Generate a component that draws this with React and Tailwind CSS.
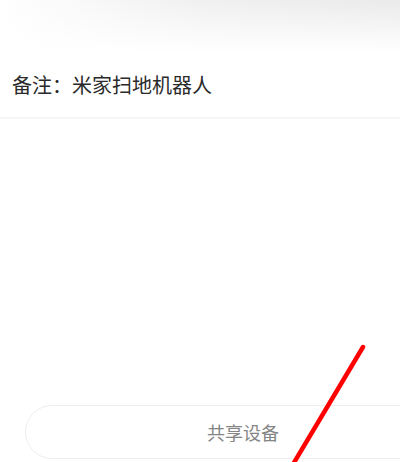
export default function App() {
  return (
    <div
      className="relative w-[400px] h-[462px] overflow-hidden bg-white"
      style={{ fontFamily: '"Noto Sans CJK SC", "Noto Sans", sans-serif' }}
    >
      <div className="h-[52px] bg-gradient-to-r from-white via-[#f0f0f0] to-[#eaeaea]">
        <div className="h-full bg-gradient-to-b from-transparent via-[#ffffff80] to-white"></div>
      </div>
      <div className="h-[67px] flex items-center pl-[12px] text-[20px] text-[#2a2a2a] border-b-2 border-[#f6f6f6]">
        备注：米家扫地机器人
      </div>
      <div className="h-[286px]"></div>
      <div className="ml-[25px] w-[436px] h-[54px] rounded-full border border-[#eeeeee] flex items-center justify-center text-[18px] text-[#858585]">
        共享设备
      </div>
      <svg
        className="absolute left-0 top-0 pointer-events-none"
        width="400"
        height="462"
        viewBox="0 0 400 462"
      >
        <line x1="363" y1="347" x2="292" y2="466" stroke="#ff0000" strokeWidth="4.5" strokeLinecap="round" />
      </svg>
    </div>
  );
}
